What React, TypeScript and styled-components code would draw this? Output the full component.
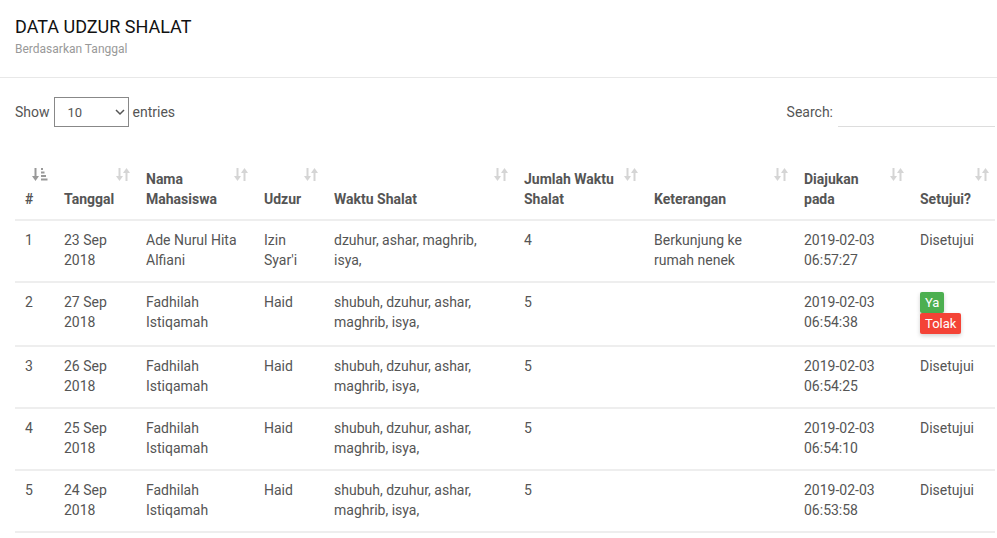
import React from 'react'
import styled, { createGlobalStyle } from 'styled-components'

const GlobalStyle = createGlobalStyle`
  body {
    margin: 0;
    background: #fff;
    font-family: Roboto, "Liberation Sans", Arial, sans-serif;
    color: #555;
  }
`

const Page = styled.div`
  width: 997px;
  overflow: hidden;
`

const Header = styled.div`
  padding: 16px 15px 20px;
  border-bottom: 1px solid #e8e8e8;
`

const Title = styled.h2`
  margin: 0;
  font-size: 18px;
  line-height: 22px;
  font-weight: 400;
  color: #111;
`

const Subtitle = styled.small`
  display: block;
  margin-top: 3px;
  font-size: 12px;
  line-height: 16px;
  color: #999;
`

const Body = styled.div`
  padding: 19px 15px 0;
`

const Controls = styled.div`
  display: flex;
  justify-content: space-between;
  align-items: center;
  width: 980px;
  font-size: 14px;
  color: #555;
`

const Label = styled.label`
  display: flex;
  align-items: center;
  gap: 4px;
`

const SelectBox = styled.div`
  position: relative;
  width: 75px;
  height: 30px;
  box-sizing: border-box;
  border: 1px solid #888;
  display: flex;
  align-items: center;
  padding-left: 13px;
  font-size: 13px;
  color: #555;
  background: #fff;
`

const Chevron = styled.svg`
  position: absolute;
  right: 3px;
  top: 10px;
`

const SearchInput = styled.input`
  width: 157px;
  height: 30px;
  box-sizing: border-box;
  border: none;
  border-bottom: 1px solid #ddd;
  outline: none;
  margin-left: 1px;
`

const Table = styled.table`
  width: 980px;
  table-layout: fixed;
  border-collapse: collapse;
  margin-top: 32px;
  font-size: 14px;
`

const Th = styled.th<{ $w: number }>`
  position: relative;
  box-sizing: border-box;
  width: ${(p) => p.$w}px;
  padding: 10px 22px 10px 10px;
  text-align: left;
  vertical-align: bottom;
  font-weight: 700;
  line-height: 20px;
  color: #555;
  border-bottom: 2px solid #eee;
`

const SortIcon = styled.svg`
  position: absolute;
  right: 6px;
  top: 8px;
`

const Td = styled.td`
  padding: 9px 10px 11px;
  vertical-align: top;
  line-height: 20px;
  color: #555;
  border-top: 2px solid #eee;
`

const Tr = styled.tr`
  &:last-child td {
    border-bottom: 2px solid #eee;
  }
`

const ActionBtn = styled.button<{ $tone: 'ok' | 'no' }>`
  display: block;
  height: 21px;
  padding: 0 5px;
  border: none;
  border-radius: 2px;
  font-family: Roboto, "Liberation Sans", Arial, sans-serif;
  font-size: 13px;
  font-weight: 400;
  line-height: 21px;
  color: #fff;
  background: ${(p) => (p.$tone === 'ok' ? '#4caf50' : '#f44336')};
  box-shadow: 0 2px 4px rgba(0, 0, 0, 0.18);
`

const Sort = ({ active }: { active?: boolean }) =>
  active ? (
    <SortIcon width="16" height="15" viewBox="0 0 16 15" fill="#999">
      <rect x="2.5" y="1" width="2" height="9" />
      <polygon points="0,9 7,9 3.5,14" />
      <rect x="9" y="1" width="2" height="2" />
      <rect x="9" y="4.5" width="3.5" height="2" />
      <rect x="9" y="8" width="5" height="2" />
      <rect x="9" y="11.5" width="6.5" height="2" />
    </SortIcon>
  ) : (
    <SortIcon width="14" height="15" viewBox="0 0 14 15" fill="#d5d5d5">
      <rect x="2.5" y="1" width="2" height="9" />
      <polygon points="0,9 7,9 3.5,14" />
      <rect x="9.5" y="5" width="2" height="9" />
      <polygon points="7,6 14,6 10.5,1" />
    </SortIcon>
  )

const columns = [
  { label: '#', w: 39, active: true },
  { label: 'Tanggal', w: 82 },
  { label: 'Nama Mahasiswa', w: 118 },
  { label: 'Udzur', w: 70 },
  { label: 'Waktu Shalat', w: 190 },
  { label: 'Jumlah Waktu Shalat', w: 130 },
  { label: 'Keterangan', w: 150 },
  { label: 'Diajukan pada', w: 116 },
  { label: 'Setujui?', w: 85 },
]

type Row = {
  no: number
  tanggal: string
  nama: string
  udzur: string
  waktu: string
  jumlah: number
  ket: string
  diajukan: string
  status: string | null
}

const rows: Row[] = [
  {
    no: 1,
    tanggal: '23 Sep 2018',
    nama: 'Ade Nurul Hita Alfiani',
    udzur: "Izin Syar'i",
    waktu: 'dzuhur, ashar, maghrib, isya,',
    jumlah: 4,
    ket: 'Berkunjung ke rumah nenek',
    diajukan: '2019-02-03 06:57:27',
    status: 'Disetujui',
  },
  {
    no: 2,
    tanggal: '27 Sep 2018',
    nama: 'Fadhilah Istiqamah',
    udzur: 'Haid',
    waktu: 'shubuh, dzuhur, ashar, maghrib, isya,',
    jumlah: 5,
    ket: '',
    diajukan: '2019-02-03 06:54:38',
    status: null,
  },
  {
    no: 3,
    tanggal: '26 Sep 2018',
    nama: 'Fadhilah Istiqamah',
    udzur: 'Haid',
    waktu: 'shubuh, dzuhur, ashar, maghrib, isya,',
    jumlah: 5,
    ket: '',
    diajukan: '2019-02-03 06:54:25',
    status: 'Disetujui',
  },
  {
    no: 4,
    tanggal: '25 Sep 2018',
    nama: 'Fadhilah Istiqamah',
    udzur: 'Haid',
    waktu: 'shubuh, dzuhur, ashar, maghrib, isya,',
    jumlah: 5,
    ket: '',
    diajukan: '2019-02-03 06:54:10',
    status: 'Disetujui',
  },
  {
    no: 5,
    tanggal: '24 Sep 2018',
    nama: 'Fadhilah Istiqamah',
    udzur: 'Haid',
    waktu: 'shubuh, dzuhur, ashar, maghrib, isya,',
    jumlah: 5,
    ket: '',
    diajukan: '2019-02-03 06:53:58',
    status: 'Disetujui',
  },
]

const App = () => {
  return (
    <Page>
      <GlobalStyle />
      <Header>
        <Title>DATA UDZUR SHALAT</Title>
        <Subtitle>Berdasarkan Tanggal</Subtitle>
      </Header>

      <Body>
        <Controls>
          <Label>
            Show
            <SelectBox>
              10
              <Chevron width="10" height="8" viewBox="0 0 10 8">
                <path d="M1 2 L5 6 L9 2" stroke="#555" strokeWidth="1.5" fill="none" />
              </Chevron>
            </SelectBox>
            entries
          </Label>
          <Label>
            Search:
            <SearchInput type="search" />
          </Label>
        </Controls>

        <Table>
          <thead>
            <tr>
              {columns.map((c) => (
                <Th key={c.label} $w={c.w}>
                  {c.label}
                  <Sort active={c.active} />
                </Th>
              ))}
            </tr>
          </thead>
          <tbody>
            {rows.map((r) => (
              <Tr key={r.no}>
                <Td>{r.no}</Td>
                <Td>{r.tanggal}</Td>
                <Td>{r.nama}</Td>
                <Td>{r.udzur}</Td>
                <Td>{r.waktu}</Td>
                <Td>{r.jumlah}</Td>
                <Td>{r.ket}</Td>
                <Td>{r.diajukan}</Td>
                <Td>
                  {r.status ?? (
                    <>
                      <ActionBtn $tone="ok">Ya</ActionBtn>
                      <ActionBtn $tone="no">Tolak</ActionBtn>
                    </>
                  )}
                </Td>
              </Tr>
            ))}
          </tbody>
        </Table>
      </Body>
    </Page>
  )
}

export default App
